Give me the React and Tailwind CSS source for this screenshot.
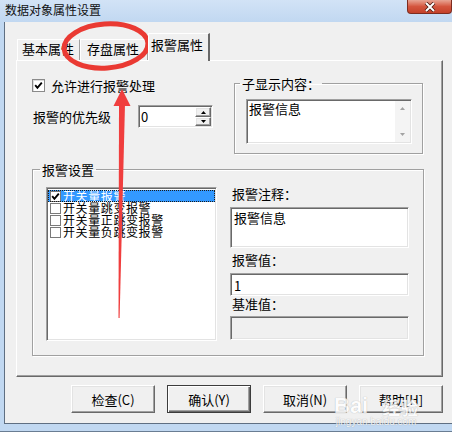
import React from "react";

const font = { fontFamily: '"Noto Sans CJK SC", "Liberation Sans", sans-serif' };

const sunken =
  "border border-t-[#a0a0a0] border-l-[#a0a0a0] border-r-white border-b-white shadow-[inset_1px_1px_0_#696969,inset_-1px_-1px_0_#e3e3e3]";
const raised =
  "border border-t-white border-l-white border-r-[#696969] border-b-[#696969] shadow-[inset_-1px_-1px_0_#a0a0a0,inset_1px_1px_0_#e3e3e3]";
const etched =
  "border border-[#a0a0a0] shadow-[inset_1px_1px_0_#fff,1px_1px_0_#fff]";

function Check({ className }) {
  return (
    <svg viewBox="0 0 9 9" className={className}>
      <path d="M1.2 4.2 L3.4 6.8 L7.8 1.6" stroke="currentColor" strokeWidth="1.9" fill="none" />
    </svg>
  );
}

function Arrow({ up }) {
  return (
    <svg width="5" height="3" viewBox="0 0 5 3">
      <path d={up ? "M2.5 0 L5 3 L0 3 Z" : "M0 0 L5 0 L2.5 3 Z"} fill="#000" />
    </svg>
  );
}

function ListItem({ text, checked, selected }) {
  return (
    <div
      className={
        "flex items-center h-[12px] " +
        (selected ? "bg-[#3399ff] text-white outline-1 outline-dotted outline-[#1a1a1a] -outline-offset-1" : "text-black")
      }
    >
      <div className="ml-[2px] w-[11px] h-[11px] border border-[#7a7a7a] bg-white flex items-center justify-center">
        {checked && <Check className="w-[9px] h-[9px] text-black" />}
      </div>
      <span className="ml-[2px] text-[12px] leading-[12px] tracking-[0.6px]">{text}</span>
    </div>
  );
}

function Button({ label, primary }) {
  return (
    <div
      className={
        "w-[84px] h-[28px] flex items-center justify-center text-[13px] leading-[13px] bg-[#f0f0f0] " +
        (primary
          ? "border border-[#3c3c3c] shadow-[inset_1px_1px_0_#fff,inset_-1px_-1px_0_#696969,inset_-2px_-2px_0_#a0a0a0]"
          : raised)
      }
    >
      {label}
    </div>
  );
}

export default function App() {
  return (
    <div className="relative w-[452px] h-[439px] overflow-hidden bg-white text-black" style={font}>
      {/* title bar */}
      <div className="h-[22px] flex items-start bg-gradient-to-b from-[#d2e3f6] to-[#c1d8f1]">
        <span className="ml-[5px] mt-[3px] text-[12px] leading-[13px] text-[#111]">数据对象属性设置</span>
        <div className="ml-auto w-[45px] h-[14px] rounded-b-[4px] border border-t-0 border-[#7d2c1f] bg-gradient-to-b from-[#e7a494] via-[#d4553e] to-[#c44129] flex items-center justify-center">
          <svg width="12" height="10" viewBox="0 0 12 10">
            <path d="M2 1 L10 9 M10 1 L2 9" stroke="#4a1a12" strokeWidth="3.6" />
            <path d="M2 1 L10 9 M10 1 L2 9" stroke="#fff" strokeWidth="2" />
          </svg>
        </div>
      </div>

      {/* frame + client */}
      <div className="flex h-[402px]">
        <div className="w-[4px] bg-[#c1d8f1]" />
        <div className="flex-1 bg-[#f0f0f0] border-l border-b border-[#5f6f82]">
          <div className="ml-[11px] mt-[11px]">
            {/* tabs */}
            <div className="flex items-end h-[27px] pl-[1px] text-[13px] leading-[13px]">
              <div className="w-[63px] h-[21px] border-t border-l border-white border-r border-r-[#a0a0a0] pl-[4px] pt-[2px]">
                基本属性
              </div>
              <div className="w-[68px] h-[21px] border-t border-l border-white border-r border-r-[#a0a0a0] pl-[6px] pt-[2px]">
                存盘属性
              </div>
              <div className="relative z-10 -mb-px w-[62px] h-[28px] bg-[#f0f0f0] border-t border-l border-white border-r-2 border-r-[#696969] pl-[2px] pt-[4px]">
                报警属性
              </div>
            </div>

            {/* panel */}
            <div className="w-[427px] h-[317px] border border-t-white border-l-white border-r-[#696969] border-b-[#696969] shadow-[inset_-1px_-1px_0_#a0a0a0] pl-[15px] pt-[16px]">
              <div className="flex">
                <div className="w-[202px]">
                  <div className="mt-[2px] flex items-center h-[13px]">
                    <div className="w-[13px] h-[13px] border border-[#8a8a8a] bg-white flex items-center justify-center shadow-[inset_1px_1px_0_#dcdcdc]">
                      <Check className="w-[9px] h-[9px] text-black" />
                    </div>
                    <span className="ml-[6px] text-[13px] leading-[13px]">允许进行报警处理</span>
                  </div>
                  <div className="mt-[13px] flex items-center">
                    <span className="w-[106px] pl-[1px] text-[13px] leading-[13px]">报警的优先级</span>
                    <div className={"w-[75px] h-[23px] bg-white flex items-center " + sunken}>
                      <span className="ml-[2px] flex-1 text-[13px] leading-[13px]">0</span>
                      <div className="w-[16px] h-[19px] mr-[1px] flex flex-col">
                        <div className={"h-[10px] flex items-center justify-center bg-[#f0f0f0] " + raised}>
                          <Arrow up />
                        </div>
                        <div className={"h-[9px] flex items-center justify-center bg-[#f0f0f0] " + raised}>
                          <Arrow />
                        </div>
                      </div>
                    </div>
                  </div>
                </div>

                <fieldset className={"w-[189px] h-[77px] pl-[11px] pt-[9px] " + etched}>
                  <legend className="-ml-[6px] px-[2px] text-[13px] leading-[13px]">子显示内容：</legend>
                  <div className={"w-[166px] h-[45px] bg-white flex " + sunken}>
                    <span className="flex-1 pl-[2px] pt-[2px] text-[13px] leading-[13px]">报警信息</span>
                    <div className="w-[15px] my-[1px] mr-[1px] bg-[#f4f4f4] flex flex-col justify-between items-center py-[6px]">
                      <svg width="5" height="3" viewBox="0 0 5 3">
                        <path d="M2.5 0 L5 3 L0 3 Z" fill="#a3a3a3" />
                      </svg>
                      <svg width="5" height="3" viewBox="0 0 5 3">
                        <path d="M0 0 L5 0 L2.5 3 Z" fill="#a3a3a3" />
                      </svg>
                    </div>
                  </div>
                </fieldset>
              </div>

              <fieldset className={"mt-[9px] w-[392px] h-[193px] pl-[13px] pt-[11px] " + etched}>
                <legend className="-ml-[6px] px-[2px] text-[13px] leading-[13px]">报警设置</legend>
                <div className="flex">
                  <div className={"w-[171px] h-[154px] bg-white pt-[2px] px-[1px] " + sunken}>
                    <ListItem text="开关量报警" checked selected />
                    <ListItem text="开关量跳变报警" />
                    <ListItem text="开关量正跳变报警" />
                    <ListItem text="开关量负跳变报警" />
                  </div>
                  <div className="ml-[13px] w-[179px] flex flex-col text-[13px] leading-[13px]">
                    <span className="pl-[2px]">报警注释：</span>
                    <div className={"mt-[7px] h-[41px] bg-white pl-[3px] pt-[3px] " + sunken}>报警信息</div>
                    <span className="mt-[5px] pl-[2px]">报警值：</span>
                    <div className={"mt-[7px] h-[23px] bg-white pl-[3px] pt-[5px] " + sunken}>1</div>
                    <span className="mt-[1px] pl-[2px]">基准值：</span>
                    <div className={"mt-[6px] h-[24px] bg-[#f0f0f0] " + sunken} />
                  </div>
                </div>
              </fieldset>
            </div>

            {/* buttons */}
            <div className="mt-[8px] ml-[55px] flex gap-[12px]">
              <Button label="检查(C)" />
              <Button label="确认(Y)" primary />
              <Button label="取消(N)" />
              <Button label="帮助[H]" />
            </div>
          </div>
        </div>
      </div>
      <div className="h-[8px] bg-[#c1d8f1] border-b border-[#6a7d93]" />

      {/* baidu watermark */}
      <div className="absolute left-[334px] top-[395px] flex flex-col items-center pointer-events-none opacity-80">
        <div className="flex items-end text-white [text-shadow:0_0_1px_#9a9a9a]" style={{ fontFamily: '"Liberation Sans", sans-serif' }}>
          <span className="text-[22px] leading-[22px] font-bold">Bai</span>
          <span className="ml-[14px] text-[18px] leading-[20px] font-bold" style={font}>经验</span>
        </div>
        <span className="text-[10px] leading-[10px] text-white [text-shadow:0_0_1px_#8a8a8a]" style={{ fontFamily: '"Liberation Sans", sans-serif' }}>
          jingyan.baidu.com
        </span>
      </div>

      {/* red annotation */}
      <svg className="absolute inset-0 pointer-events-none" width="452" height="439" viewBox="0 0 452 439">
        <ellipse cx="106" cy="46" rx="42" ry="22" transform="rotate(-4 106 46)" fill="none" stroke="#ea3a33" strokeWidth="5" />
        <polygon points="118.5,318 119.6,318 125,104 119,104" fill="#f03e3e" />
        <polygon points="122,89 130.5,106 113.5,106" fill="#f03e3e" />
      </svg>
    </div>
  );
}
